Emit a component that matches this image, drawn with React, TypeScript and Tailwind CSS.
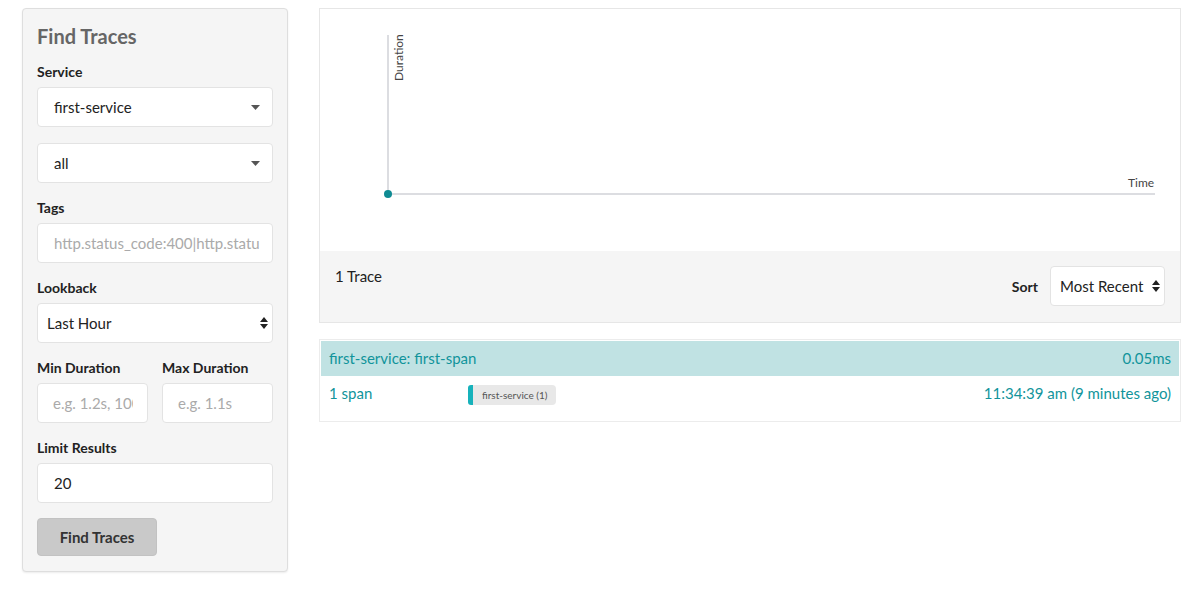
import React from 'react';

const font = { fontFamily: 'Lato, "Open Sans", sans-serif' };

const Caret = () => (
  <svg width="9" height="5" viewBox="0 0 9 5" className="fill-[#555]">
    <path d="M0 0h9L4.5 5z" />
  </svg>
);

const UpDown = () => (
  <svg width="8" height="12" viewBox="0 0 8 12" className="fill-[#222]">
    <path d="M4 0l4 5H0z M4 12l4-5H0z" />
  </svg>
);

const Label = ({ children }: { children: React.ReactNode }) => (
  <div className="text-[14px] font-bold text-[#222] leading-[20px] mb-[5px]">{children}</div>
);

const boxCls = 'h-10 bg-white border border-[#e3e3e3] rounded-[4px] flex items-center text-[15px]';

export default function App() {
  return (
    <div style={font} className="w-[1200px] h-[606px] bg-white flex items-start gap-[31px] pl-[22px] pt-2">
      <div className="w-[266px] h-[564px] bg-[#f5f5f5] border border-[#dedede] rounded-[4px] shadow-[0_1px_2px_rgba(0,0,0,0.08)] px-[14px] pt-[13px]">
        <div className="text-[20px] font-bold text-[#666] leading-[28px] mb-[12px]">Find Traces</div>

        <Label>Service</Label>
        <div className={`${boxCls} justify-between pl-4 pr-[12px] text-[#222]`}>
          <span>first-service</span>
          <Caret />
        </div>
        <div className={`${boxCls} justify-between pl-4 pr-[12px] text-[#222] mt-4`}>
          <span>all</span>
          <Caret />
        </div>

        <div className="mt-[15px]">
          <Label>Tags</Label>
        </div>
        <div className={`${boxCls} pl-4 text-[#aaa] overflow-hidden whitespace-nowrap`}>
          http.status_code:400|http.statu
        </div>

        <div className="mt-[15px]">
          <Label>Lookback</Label>
        </div>
        <div className={`${boxCls} justify-between pl-[9px] pr-[4px] text-[#222]`}>
          <span>Last Hour</span>
          <UpDown />
        </div>

        <div className="mt-[15px] flex gap-[14px]">
          <div className="w-[111px]">
            <Label>Min Duration</Label>
            <div className={`${boxCls} pl-[15px] pr-[14px] text-[#aaa]`}>
              <span className="overflow-hidden whitespace-nowrap">e.g. 1.2s, 100ms</span>
            </div>
          </div>
          <div className="flex-1">
            <Label>Max Duration</Label>
            <div className={`${boxCls} pl-[15px] text-[#aaa]`}>e.g. 1.1s</div>
          </div>
        </div>

        <div className="mt-[15px]">
          <Label>Limit Results</Label>
        </div>
        <div className={`${boxCls} pl-4 text-[#222]`}>20</div>

        <button className="mt-[15px] w-[120px] h-[38px] bg-[#c9c9c9] rounded-[4px] border border-[#c2c2c2] text-[15px] font-bold text-[#333]">
          Find Traces
        </button>
      </div>

      <div className="w-[862px] flex flex-col">
        <div className="border border-[#e6e6e6]">
          <div className="h-[242px] bg-white relative">
            <svg width="860" height="242" className="absolute left-0 top-0">
              <line x1="68" y1="26" x2="68" y2="185" stroke="#dcdde1" strokeWidth="2" />
              <line x1="68" y1="185" x2="835" y2="185" stroke="#dcdde1" strokeWidth="2" />
              <circle cx="68" cy="185" r="4" fill="#0f8b93" />
            </svg>
            <div className="absolute left-[72px] top-[26px] text-[12px] text-[#444] leading-[14px] origin-top-left -rotate-90 translate-y-[46px]">
              Duration
            </div>
            <div className="absolute left-[808px] top-[167px] text-[12px] text-[#444] leading-[14px]">Time</div>
          </div>
          <div className="h-[71px] bg-[#f5f5f5] flex items-start justify-between pl-[15px] pr-[15px]">
            <div className="text-[15px] text-[#222] mt-[14px]">1 Trace</div>
            <div className="flex items-center gap-[12px] mt-[15px]">
              <span className="text-[14px] font-bold text-[#222]">Sort</span>
              <div className="w-[115px] h-10 bg-white border border-[#e3e3e3] rounded-[4px] flex items-center justify-between pl-[9px] pr-[4px] text-[15px] text-[#222]">
                <span>Most Recent</span>
                <UpDown />
              </div>
            </div>
          </div>
        </div>

        <div className="mt-4 border border-[#ececec] p-[1px]">
          <div className="h-[35px] bg-[#c0e2e3] flex items-center justify-between px-[8px] text-[15px] text-[#11949b]">
            <span>first-service: first-span</span>
            <span>0.05ms</span>
          </div>
          <div className="h-[44px] flex items-start pt-[6px] px-[8px] text-[15px] text-[#11949b]">
            <span className="w-[139px]">1 span</span>
            <div className="mt-[3px] h-[20px] flex items-stretch">
              <div className="w-[5px] bg-[#17b2bb] rounded-l-[3px]" />
              <div className="bg-[#e8e8e8] rounded-r-[4px] px-[9px] flex items-center text-[10px] text-[#555]">
                first-service (1)
              </div>
            </div>
            <span className="ml-auto">11:34:39 am (9 minutes ago)</span>
          </div>
        </div>
      </div>
    </div>
  );
}
